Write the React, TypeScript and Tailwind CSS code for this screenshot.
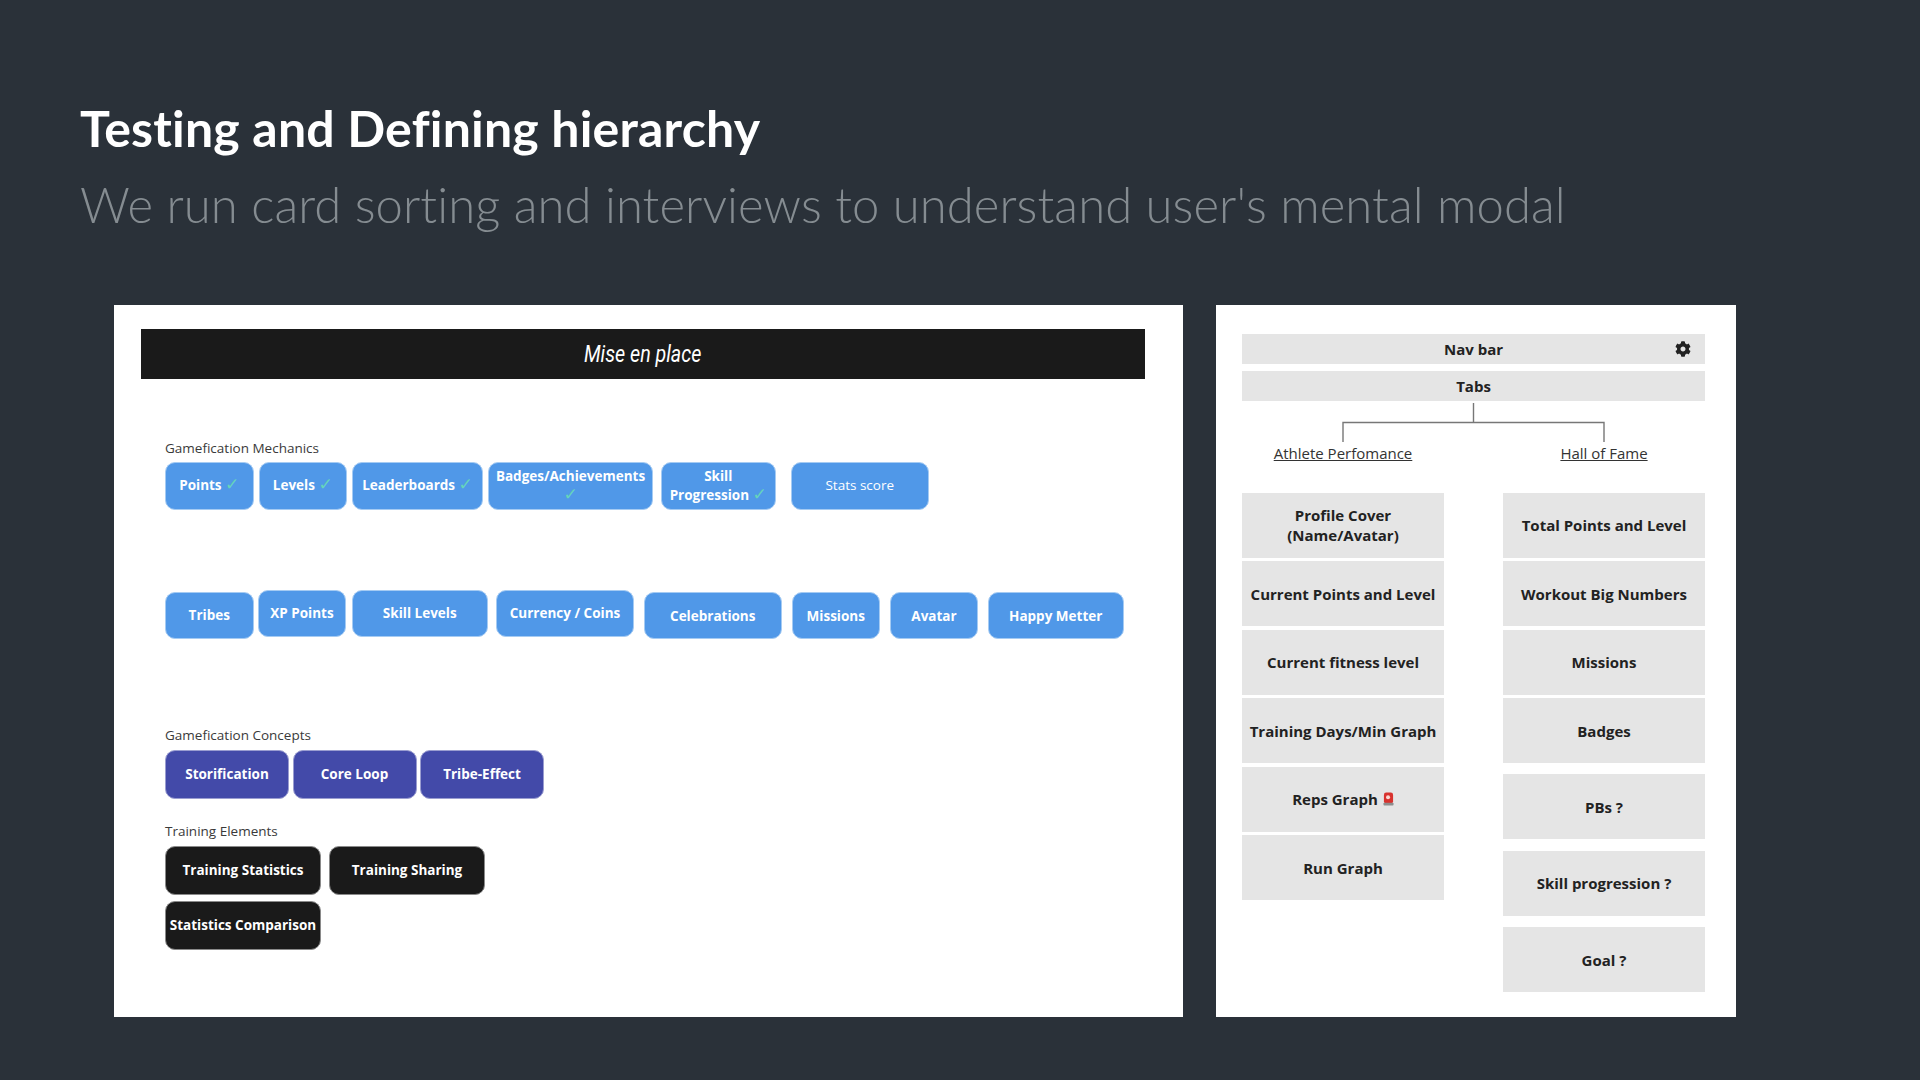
import { FaCog } from "react-icons/fa";

const chip =
  "flex items-center justify-center rounded-[10px] text-center font-['Open_Sans',sans-serif] text-[13.5px] leading-[19px] font-bold text-white";
const blue = chip + " h-[47.5px] bg-[#5098e8] border border-[#a5cbf3]";
const purple = chip + " h-[49px] w-[124px] bg-[#434aa9] border border-[#9a9dd0]";
const dark = chip + " h-[49px] bg-[#1a1a1a] border border-[#8a8a8a]";
const label = "font-['Open_Sans',sans-serif] text-[13.5px] leading-[18px] text-[#3a3a3a]";
const box =
  "flex h-[65px] w-[202px] items-center justify-center bg-[#e5e5e5] text-center font-['Open_Sans',sans-serif] text-[15px] leading-[20px] font-bold text-[#222222]";
const bar =
  "flex items-center justify-center bg-[#e5e5e5] font-['Open_Sans',sans-serif] text-[15px] font-bold text-[#222222]";
const check = "font-['DejaVu_Sans',sans-serif] text-[17px] leading-[16px] font-normal text-[#66d4bb]";

function Check() {
  return <span className={check}>✓</span>;
}

export default function App() {
  return (
    <div className="flex h-[1080px] w-[1920px] flex-col overflow-hidden bg-[#2a3139]">
      <div className="flex flex-col pl-[80px] pt-[98px]">
        <h1 className="font-['Lato',sans-serif] text-[50px] leading-[60px] font-bold tracking-[0.2px] text-white">
          Testing and Defining hierarchy
        </h1>
        <p className="mt-[15.5px] font-['Lato',sans-serif] text-[49px] leading-[60px] font-light tracking-[0.07px] text-[#858c91]">
          We run card sorting and interviews to understand user's mental modal
        </p>
      </div>

      <div className="ml-[114px] mt-[71px] flex items-start gap-[33px]">
        {/* Left card */}
        <div className="flex h-[712px] w-[1069px] flex-col bg-white pl-[27px] pt-[24.5px]">
          <div className="flex h-[50px] w-[1004px] items-center justify-center bg-[#1a1a1a] pt-[3px] font-['Roboto',sans-serif] text-[23px] font-normal italic text-white">
            <span className="inline-block scale-x-[0.855]">Mise en place</span>
          </div>

          <div className="ml-[24px] mt-[59.5px] flex flex-col">
            <div className={label}>Gamefication Mechanics</div>
            <div className="mt-[5.5px] flex items-start">
              <div className={blue + " w-[88.5px]"}>
                <span>
                  Points <Check />
                </span>
              </div>
              <div className={blue + " ml-[5px] w-[88.5px]"}>
                <span>
                  Levels <Check />
                </span>
              </div>
              <div className={blue + " ml-[5px] w-[131px]"}>
                <span>
                  Leaderboards <Check />
                </span>
              </div>
              <div className={blue + " ml-[5px] w-[165px]"}>
                <span>
                  Badges/Achievements
                  <br />
                  <Check />
                </span>
              </div>
              <div className={blue + " ml-[7.5px] w-[115.5px]"}>
                <span>
                  Skill
                  <br />
                  Progression <Check />
                </span>
              </div>
              <div className={blue + " ml-[14.5px] w-[138.5px] font-normal"}>Stats score</div>
            </div>

            <div className="mt-[80px] flex items-start">
              <div className={blue + " mt-[2px] w-[88.5px]"}>Tribes</div>
              <div className={blue + " ml-[4.5px] w-[88px]"}>XP Points</div>
              <div className={blue + " ml-[6px] w-[135.5px]"}>Skill Levels</div>
              <div className={blue + " ml-[8.5px] w-[138px]"}>Currency / Coins</div>
              <div className={blue + " ml-[9.5px] mt-[2px] w-[138.5px] pt-[2px]"}>Celebrations</div>
              <div className={blue + " ml-[9.5px] mt-[2px] w-[88.5px] pt-[2px]"}>Missions</div>
              <div className={blue + " ml-[10px] mt-[2px] w-[88px] pt-[2px]"}>Avatar</div>
              <div className={blue + " ml-[10px] mt-[2px] w-[135.5px] pt-[2px]"}>Happy Metter</div>
            </div>

            <div className={label + " mt-[87px]"}>Gamefication Concepts</div>
            <div className="mt-[6px] flex items-start gap-[3.5px]">
              <div className={purple}>Storification</div>
              <div className={purple}>Core Loop</div>
              <div className={purple}>Tribe-Effect</div>
            </div>

            <div className={label + " mt-[23px]"}>Training Elements</div>
            <div className="mt-[6px] flex items-start gap-[8px]">
              <div className={dark + " w-[156px]"}>Training Statistics</div>
              <div className={dark + " w-[156px]"}>Training Sharing</div>
            </div>
            <div className={dark + " mt-[6px] w-[156px]"}>Statistics Comparison</div>
          </div>
        </div>

        {/* Right card */}
        <div className="flex h-[712px] w-[520px] flex-col bg-white pl-[26px] pt-[29.5px]">
          <div className={bar + " relative h-[30px] w-[463px]"}>
            Nav bar
            <FaCog className="absolute right-[14px] top-[7px] text-[16px] text-[#222222]" />
          </div>
          <div className={bar + " mt-[7px] h-[30px] w-[463px]"}>Tabs</div>

          <svg className="mt-[2px] block" width="463" height="40" viewBox="0 0 463 40" fill="none">
            <path
              d="M231.5 0V19.5M101 39V19.5H362V39"
              stroke="#777777"
              strokeWidth="1.4"
            />
          </svg>

          <div className="flex w-[463px] justify-between">
            <div className="flex w-[202px] justify-center font-['Open_Sans',sans-serif] text-[15px] leading-[20px] text-[#333333] underline">
              Athlete Perfomance
            </div>
            <div className="flex w-[202px] justify-center font-['Open_Sans',sans-serif] text-[15px] leading-[20px] text-[#333333] underline">
              Hall of Fame
            </div>
          </div>

          <div className="mt-[29.5px] flex w-[463px] items-start justify-between">
            <div className="flex flex-col gap-[3.5px]">
              <div className={box}>
                <span>
                  Profile Cover
                  <br />
                  (Name/Avatar)
                </span>
              </div>
              <div className={box}>Current Points and Level</div>
              <div className={box}>Current fitness level</div>
              <div className={box}>Training Days/Min Graph</div>
              <div className={box + " gap-[5px]"}>
                Reps Graph
                <svg width="11" height="14" viewBox="0 0 12 15">
                  <rect x="1" y="0.5" width="10" height="12" rx="2.5" fill="#d8322e" />
                  <rect x="0.5" y="11.5" width="11" height="3" rx="1" fill="#8d8d8d" />
                  <circle cx="5.5" cy="5.5" r="2.2" fill="#fbd9d4" />
                </svg>
              </div>
              <div className={box}>Run Graph</div>
            </div>
            <div className="flex flex-col">
              <div className="flex flex-col gap-[3.5px]">
                <div className={box}>Total Points and Level</div>
                <div className={box}>Workout Big Numbers</div>
                <div className={box}>Missions</div>
                <div className={box}>Badges</div>
              </div>
              <div className="mt-[11px] flex flex-col gap-[11.5px]">
                <div className={box}>PBs ?</div>
                <div className={box}>Skill progression ?</div>
                <div className={box}>Goal ?</div>
              </div>
            </div>
          </div>
        </div>
      </div>
    </div>
  );
}
